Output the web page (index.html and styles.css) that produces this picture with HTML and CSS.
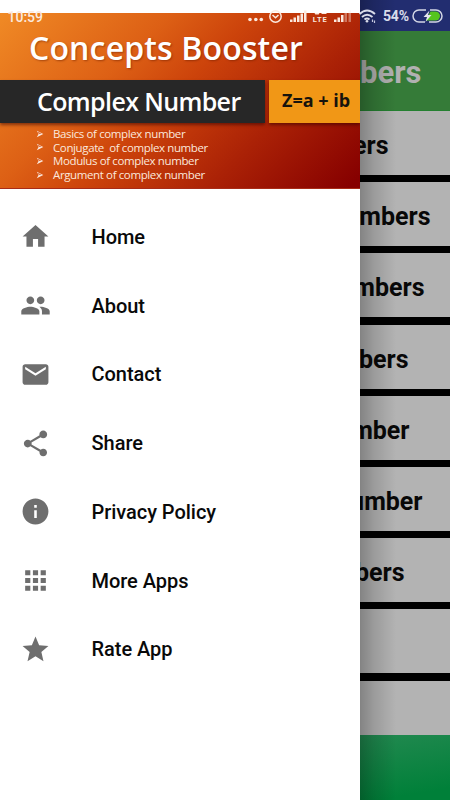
FILE: index.html
```html
<!DOCTYPE html>
<html lang="en">
<head>
<meta charset="utf-8">
<title>Concepts Booster</title>
<link rel="stylesheet" href="styles.css">
</head>
<body>
<div class="screen">
  <aside class="drawer">
    <header class="hero">
      <h1 class="hero-title">Concepts Booster</h1>
      <div class="band">
        <div class="band-main"><span>Complex Number</span></div>
        <div class="band-formula"><span>Z=a + ib</span></div>
      </div>
      <ul class="topics">
        <li><svg viewBox="0 0 8 8"><path d="M.8 .8 7.3 4 .8 7.2 2.6 4z"/><path class="cut" d="M1.600 1.700 5.600 3.700H2.900z"/></svg><span>Basics of complex number</span></li>
        <li><svg viewBox="0 0 8 8"><path d="M.8 .8 7.3 4 .8 7.2 2.6 4z"/><path class="cut" d="M1.600 1.700 5.600 3.700H2.900z"/></svg><span>Conjugate&nbsp; of complex number</span></li>
        <li><svg viewBox="0 0 8 8"><path d="M.8 .8 7.3 4 .8 7.2 2.6 4z"/><path class="cut" d="M1.600 1.700 5.600 3.700H2.900z"/></svg><span>Modulus of complex number</span></li>
        <li><svg viewBox="0 0 8 8"><path d="M.8 .8 7.3 4 .8 7.2 2.6 4z"/><path class="cut" d="M1.600 1.700 5.600 3.700H2.900z"/></svg><span>Argument of complex number</span></li>
      </ul>
    </header>
    <nav class="menu">
      <a><svg viewBox="0 0 24 24"><path d="M10 20v-6h4v6h5v-8h3L12 3 2 12h3v8z"/></svg><span>Home</span></a>
      <a><svg viewBox="0 0 24 24"><path d="M16 11c1.66 0 2.99-1.34 2.99-3S17.66 5 16 5s-3 1.34-3 3 1.34 3 3 3zm-8 0c1.66 0 2.99-1.34 2.99-3S9.66 5 8 5 5 6.34 5 8s1.34 3 3 3zm0 2c-2.33 0-7 1.17-7 3.5V19h14v-2.500c0-2.330-4.670-3.500-7-3.500zm8 0c-.29 0-.62.02-.97.05 1.160.84 1.970 1.970 1.970 3.450V19h6v-2.500c0-2.330-4.670-3.500-7-3.500z"/></svg><span>About</span></a>
      <a><svg viewBox="0 0 24 24"><path d="M20 4H4c-1.100 0-1.990.9-1.990 2L2 18c0 1.100.9 2 2 2h16c1.100 0 2-.9 2-2V6c0-1.100-.9-2-2-2zm0 4l-8 5-8-5V6l8 5 8-5v2z"/></svg><span>Contact</span></a>
      <a><svg viewBox="0 0 24 24"><path d="M18 16.080c-.76 0-1.440.3-1.960.77L8.910 12.700c.05-.23.09-.46.09-.7s-.04-.47-.09-.7l7.050-4.110c.54.5 1.250.81 2.040.81 1.660 0 3-1.340 3-3s-1.340-3-3-3-3 1.340-3 3c0 .24.04.47.09.7L8.040 9.810C7.500 9.310 6.790 9 6 9c-1.660 0-3 1.340-3 3s1.340 3 3 3c.79 0 1.500-.31 2.040-.81l7.120 4.160c-.05.21-.08.43-.08.65 0 1.610 1.310 2.920 2.920 2.920s2.920-1.310 2.920-2.920-1.310-2.920-2.920-2.920z"/></svg><span>Share</span></a>
      <a><svg viewBox="0 0 24 24"><path d="M12 2C6.480 2 2 6.480 2 12s4.480 10 10 10 10-4.480 10-10S17.520 2 12 2zm1 15h-2v-6h2v6zm0-8h-2V7h2v2z"/></svg><span>Privacy Policy</span></a>
      <a><svg viewBox="0 0 24 24"><path d="M4 8h4V4H4v4zm6 12h4v-4h-4v4zm-6 0h4v-4H4v4zm0-6h4v-4H4v4zm6 0h4v-4h-4v4zm6-10v4h4V4h-4zm-6 4h4V4h-4v4zm6 6h4v-4h-4v4zm0 6h4v-4h-4v4z"/></svg><span>More Apps</span></a>
      <a><svg viewBox="0 0 24 24"><path d="M12 17.270L18.180 21l-1.640-7.030L22 9.240l-7.190-.61L12 2 9.190 8.630 2 9.240l5.460 4.730L5.820 21z"/></svg><span>Rate App</span></a>
    </nav>
  </aside>
  <main class="app">
    <div class="app-status"></div>
    <div class="app-title"><span>Numbers</span></div>
    <div class="rows">
      <div class="row end-62"><span>Numbers</span></div>
      <div class="row end-20"><span>Numbers</span></div>
      <div class="row end-26"><span>Numbers</span></div>
      <div class="row end-42"><span>Numbers</span></div>
      <div class="row end-41"><span>Number</span></div>
      <div class="row end-28"><span>Number</span></div>
      <div class="row end-46"><span>Numbers</span></div>
      <div class="row"></div>
      <div class="row last"></div>
    </div>
    <div class="app-bottom"></div>
  </main>
  <div class="status">
    <span class="clock">10:59</span>
    <svg class="status-icons" viewBox="245 0 137 31">
      <g fill="#fbe9df">
        <circle cx="250" cy="19.500" r="1.800"/><circle cx="255.800" cy="19.500" r="1.800"/><circle cx="261.300" cy="19.500" r="1.800"/>
        <circle cx="275.500" cy="16.500" r="5.700" fill="none" stroke="#fbe9df" stroke-width="1.500"/>
        <path d="m272.500 15 3 2.800 3-2.800" fill="none" stroke="#fbe9df" stroke-width="1.500"/>
        <path d="M290 19.500h2.500v2.500h-2.500zm3.500-2h2.500v4.500h-2.500zm3.500-2h2.500v6.500h-2.500zm3.500-2h2.500v8.500h-2.500zm3.500-3h2.500v11.500h-2.500z"/>
        <path d="M334 19.500h2.500v2.500h-2.500zm3.500-2h2.500v4.500h-2.500zm3.500-2.500h2.500v7h-2.500z"/>
        <path d="M344.500 12.500h2.500v9.500h-2.500zm4-2h2.500v11.500h-2.500z" opacity=".4"/>
        <path d="M314.500 13h5l-.8 1.500h-3.400zm7 0h5v1h-5z"/>
      </g>
      <text x="312.800" y="22" class="lte" textLength="14">LTE</text>
      <g fill="none" stroke="#d9dcea" stroke-width="1.900">
        <path d="M359.500 14q7.500-7 15.500 0"/><path d="M362 17q5-4.500 10.500 0"/><path d="M364.500 19.500q2.500-2 5 0"/>
      </g>
      <circle cx="367" cy="21.200" r="1.300" fill="#d9dcea"/>
      <path d="M372.500 19.500v2.500m2-1.500v2.500" stroke="#c3c7de" stroke-width="1.200"/>
    </svg>
    <span class="percent">54%</span>
    <svg class="battery" viewBox="0 0 31 14">
      <path d="M18.500 2.500h5a4.500 4.500 0 0 1 0 9h-9.500z" fill="#55c51d"/>
      <path d="M14 1H7a6 6 0 0 0 0 12h6M18 1h6a6 6 0 0 1 0 12h-7" fill="none" stroke="#d3d6e5" stroke-width="1.500"/>
      <path d="M17.500 1.500 11.500 8h3.500l-1.500 5 6-7H16z" fill="#e4e6ee"/>
    </svg>
  </div>
</div>
</body>
</html>
```
FILE: styles.css
```css
* { box-sizing: border-box; }
body { margin: 0; font-family: Roboto, "Liberation Sans", sans-serif; }
.screen { position: relative; display: flex; width: 450px; height: 800px; overflow: hidden; background: #fff; }
.drawer { width: 360px; padding-top: 13px; background: #fff; }

.hero {
  height: 176px;
  overflow: hidden;
  background: linear-gradient(135deg, #f08a25 0%, #dd6015 32%, #cc430b 48%, #aa2106 72%, #860000 98%);
  color: #fff;
  font-family: "Open Sans", "Noto Sans", sans-serif;
  border-bottom: 1px solid #a82c18;
}
.hero-title {
  height: 67px;
  margin: 0;
  padding-left: 29px;
  font-size: 32px;
  line-height: 69px;
  font-weight: 600;
  letter-spacing: .15px;
  white-space: nowrap;
  text-shadow: 1px 1px 2px #70200088;
}
.band { display: flex; gap: 4px; height: 43px; }
.band-main { width: 265px; padding-left: 37px; background: #272727; box-shadow: 0 2px 3px #3008; font-size: 25px; line-height: 43px; font-weight: 600; letter-spacing: -.62px; white-space: nowrap; }
.band-formula { flex: 1; padding-left: 13px; background: #f19716; box-shadow: 0 2px 3px #3008; color: #17130c; font-size: 18px; line-height: 41px; font-weight: 700; white-space: nowrap; }
.topics { margin: 0; padding: 4px 0 0 36px; list-style: none; font-size: 11.500px; line-height: 13.600px; letter-spacing: -.38px; }
.topics li { display: flex; align-items: center; gap: 9px; white-space: pre; color: #fbe8dd; }
.topics svg { width: 8px; height: 8px; fill: #fbe8dd; }
.topics .cut { fill: #d24a0d; }

.menu { padding-top: 13.500px; }
.menu a { display: flex; align-items: center; height: 68.750px; padding-left: 20px; gap: 40.500px; color: #090909; font-size: 20px; line-height: 24px; font-weight: 500; letter-spacing: -.04px; }
.menu svg { width: 31px; height: 31px; fill: #6e6e6e; }

.app { position: relative; display: flex; flex-direction: column; width: 90px; height: 800px; overflow: hidden; }
.app::after { content: ""; position: absolute; inset: 0; background: linear-gradient(90deg, #0004 0, #0002 14px, #0000 36px); }
.app-status { height: 31px; background: #222d70; }
.app-title { display: flex; justify-content: flex-end; height: 80px; padding-right: 28.500px; background: #357b38; color: #b1b1b1; font-size: 31px; font-weight: 700; line-height: 83px; border-bottom: 1px solid #248030; }
.rows { display: flex; flex-direction: column; background: #000; gap: 7.200px; }
.row { display: flex; justify-content: flex-end; height: 64px; background: #b3b3b3; color: #080808; font-size: 25px; font-weight: 700; line-height: 69px; }
.row.last { height: 54.400px; }
.end-62 { padding-right: 61.500px; }
.end-20 { padding-right: 19.500px; }
.end-26 { padding-right: 25.500px; }
.end-42 { padding-right: 41.500px; }
.end-41 { padding-right: 40.500px; }
.end-28 { padding-right: 27.500px; }
.end-46 { padding-right: 45.500px; }
.app-bottom { flex: 1; background: linear-gradient(170deg, #228950, #008039 85%); }

.status { position: absolute; top: 0; left: 0; display: flex; align-items: flex-start; width: 450px; height: 31px; }
.clock { width: 245px; padding-left: 7.500px; color: #fbe9df; font-size: 14px; line-height: 34px; font-weight: 500; }
.status-icons { width: 137px; height: 31px; }
.lte { fill: #fbe9df; font: 700 7.500px Roboto, sans-serif; }
.percent { width: 30px; padding-left: 1px; color: #d9dcea; font-size: 14px; line-height: 32px; font-weight: 700; letter-spacing: -.2px; }
.battery { width: 31px; height: 14px; margin-top: 8.500px; }
```
